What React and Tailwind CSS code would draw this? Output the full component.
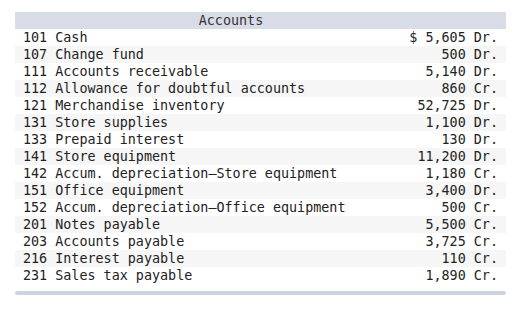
const accounts = [
  ['101', 'Cash', '$ 5,605', 'Dr.'],
  ['107', 'Change fund', '500', 'Dr.'],
  ['111', 'Accounts receivable', '5,140', 'Dr.'],
  ['112', 'Allowance for doubtful accounts', '860', 'Cr.'],
  ['121', 'Merchandise inventory', '52,725', 'Dr.'],
  ['131', 'Store supplies', '1,100', 'Dr.'],
  ['133', 'Prepaid interest', '130', 'Dr.'],
  ['141', 'Store equipment', '11,200', 'Dr.'],
  ['142', 'Accum. depreciation\u2014Store equipment', '1,180', 'Cr.'],
  ['151', 'Office equipment', '3,400', 'Dr.'],
  ['152', 'Accum. depreciation\u2014Office equipment', '500', 'Cr.'],
  ['201', 'Notes payable', '5,500', 'Cr.'],
  ['203', 'Accounts payable', '3,725', 'Cr.'],
  ['216', 'Interest payable', '110', 'Cr.'],
  ['231', 'Sales tax payable', '1,890', 'Cr.'],
]

export default function App() {
  return (
    <div className="w-[529px] h-[312px] bg-white pt-3 px-[15px] font-['DejaVu_Sans_Mono',monospace] text-[13.4px] text-[#222] whitespace-pre">
      <div className="w-[491px]">
        <div className="flex h-[17px] items-center bg-[#d8dce6] leading-none">
          <div className="w-[432px] text-center text-[#333]">Accounts</div>
        </div>
        {accounts.map(([num, name, amt, side], i) => (
          <div
            key={num}
            className={`flex h-[17px] items-center justify-between px-2 leading-none ${
              i % 2 === 1 ? 'bg-[#f6f6f6]' : 'bg-white'
            }`}
          >
            <span>{num} {name}</span>
            <span>{amt} {side}</span>
          </div>
        ))}
        <div className="mt-[7px] h-1 rounded-full bg-[#cdd3df]" />
      </div>
    </div>
  )
}
